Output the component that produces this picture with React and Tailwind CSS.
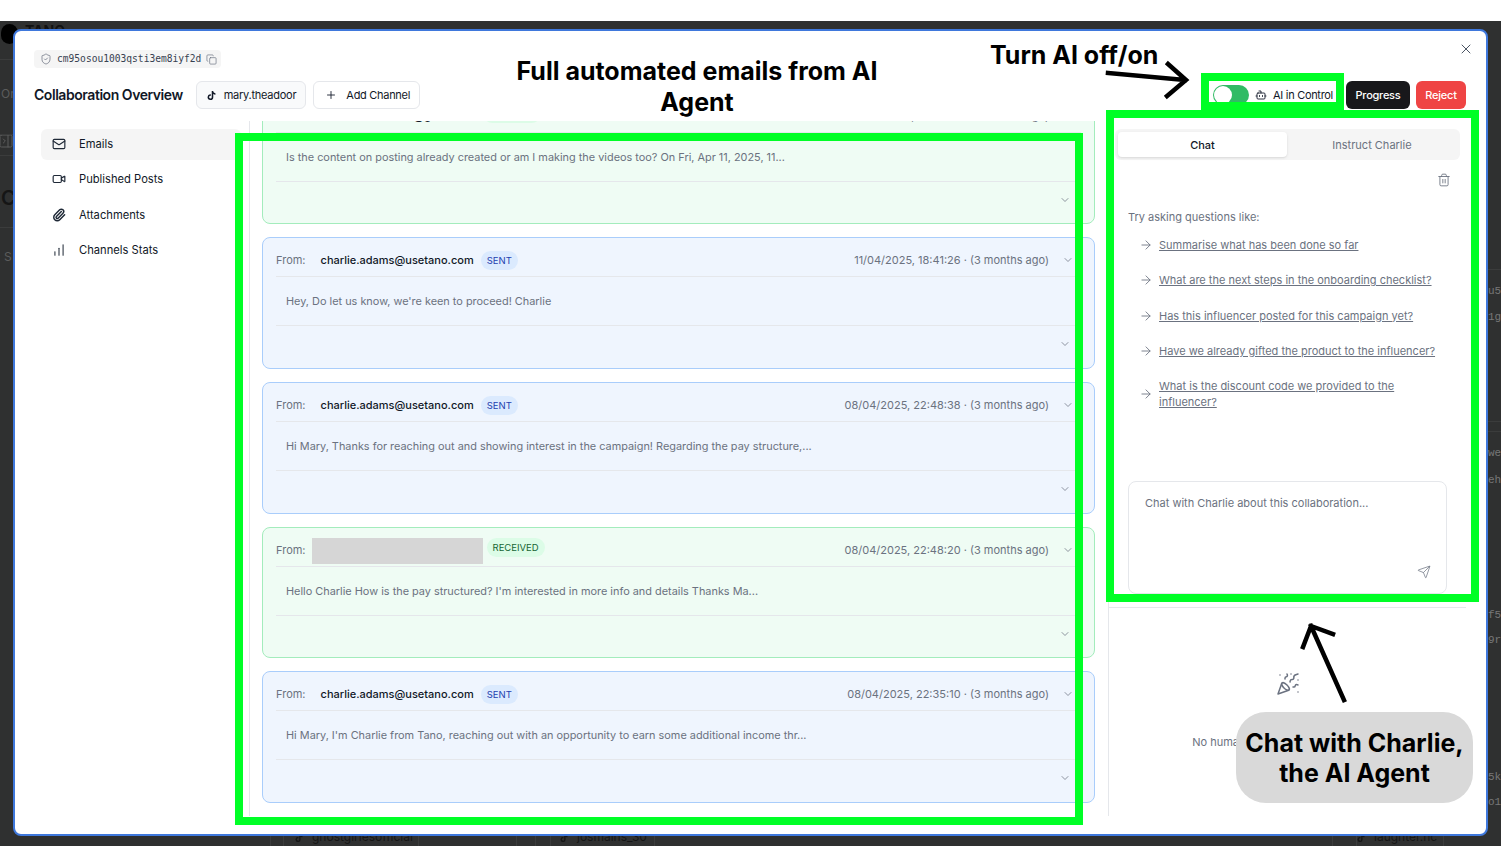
import {
  Mail,
  Video,
  Paperclip,
  ChartNoAxesColumnIncreasing,
  ChevronDown,
  Copy,
  ShieldCheck,
  Plus,
  X,
  Bot,
  Trash2,
  ArrowRight,
  Send,
  PartyPopper,
  PanelRightClose,
} from 'lucide-react';
import { FaTiktok } from 'react-icons/fa';

const navItems = [
  { label: 'Emails', icon: Mail, stroke: 2 },
  { label: 'Published Posts', icon: Video, stroke: 2 },
  { label: 'Attachments', icon: Paperclip, stroke: 2.5 },
  { label: 'Channels Stats', icon: ChartNoAxesColumnIncreasing, stroke: 1.75 },
];

const emails = [
  {
    from: 'hi.maria.theadoor@gmail.com',
    type: 'received',
    date: '11/04/2025, 18:12:44 · (3 months ago)',
    body: 'Is the content on posting already created or am I making the videos too? On Fri, Apr 11, 2025, 11...',
  },
  {
    from: 'charlie.adams@usetano.com',
    type: 'sent',
    date: '11/04/2025, 18:41:26 · (3 months ago)',
    body: "Hey, Do let us know, we're keen to proceed! Charlie",
  },
  {
    from: 'charlie.adams@usetano.com',
    type: 'sent',
    date: '08/04/2025, 22:48:38 · (3 months ago)',
    body: 'Hi Mary, Thanks for reaching out and showing interest in the campaign! Regarding the pay structure,...',
  },
  {
    redacted: true,
    type: 'received',
    date: '08/04/2025, 22:48:20 · (3 months ago)',
    body: "Hello Charlie How is the pay structured? I'm interested in more info and details Thanks Ma...",
  },
  {
    from: 'charlie.adams@usetano.com',
    type: 'sent',
    date: '08/04/2025, 22:35:10 · (3 months ago)',
    body: "Hi Mary, I'm Charlie from Tano, reaching out with an opportunity to earn some additional income thr...",
  },
];

const suggestions = [
  'Summarise what has been done so far',
  'What are the next steps in the onboarding checklist?',
  'Has this influencer posted for this campaign yet?',
  'Have we already gifted the product to the influencer?',
  'What is the discount code we provided to the influencer?',
];

// bits of the page behind the modal that stick out at the edges
const backdropBits = [
  { text: 'TANO', cls: 'left-[25px] top-[24px] text-[14px] font-bold text-[#111111]' },
  { text: 'Or', cls: 'left-[1px] top-[87px] text-[12px] text-[#5c5c5c]' },
  { text: 'C', cls: 'left-[1px] top-[191px] text-[20px] font-semibold text-[#151515]' },
  { text: 'S', cls: 'left-[4px] top-[250px] text-[12px] text-[#5c5c5c]' },
  { text: 'u5', cls: 'left-[1488px] top-[284px] font-mono text-[11px] text-[#777777]' },
  { text: '1g', cls: 'left-[1488px] top-[310px] font-mono text-[11px] text-[#777777]' },
  { text: 'we', cls: 'left-[1488px] top-[446px] font-mono text-[11px] text-[#777777]' },
  { text: 'eh', cls: 'left-[1488px] top-[473px] font-mono text-[11px] text-[#777777]' },
  { text: 'f5', cls: 'left-[1488px] top-[608px] font-mono text-[11px] text-[#777777]' },
  { text: '9r', cls: 'left-[1488px] top-[633px] font-mono text-[11px] text-[#777777]' },
  { text: '5k', cls: 'left-[1488px] top-[770px] font-mono text-[11px] text-[#777777]' },
  { text: 'o1', cls: 'left-[1488px] top-[795px] font-mono text-[11px] text-[#777777]' },
  { text: 'ghostgirlesofficial', cls: 'left-[312px] top-[830px] text-[12px] text-[#151515]' },
  { text: 'josmains_30', cls: 'left-[577px] top-[830px] text-[12px] text-[#151515]' },
  { text: 'laughter.nc', cls: 'left-[1374px] top-[830px] text-[12px] text-[#151515]' },
];

const backdropLines = [
  'left-0 top-[59px] h-px w-[13px]',
  'left-0 top-[134px] h-px w-[13px]',
  'left-0 top-[155px] h-px w-[13px]',
  'left-0 top-[227px] h-px w-[13px]',
  'left-[1488px] top-[269px] h-px w-[13px]',
  'left-[1488px] top-[421px] h-px w-[13px]',
  'left-[1488px] top-[431px] h-px w-[13px]',
  'left-[270px] top-[836px] h-[10px] w-px',
  'left-[283px] top-[836px] h-[10px] w-px',
  'left-[418px] top-[836px] h-[10px] w-px',
  'left-[516px] top-[836px] h-[10px] w-px',
  'left-[535px] top-[836px] h-[10px] w-px',
  'left-[550px] top-[836px] h-[10px] w-px',
  'left-[654px] top-[836px] h-[10px] w-px',
  'left-[1332px] top-[836px] h-[10px] w-px',
  'left-[1356px] top-[836px] h-[10px] w-px',
  'left-[1443px] top-[836px] h-[10px] w-px',
];

function EmailCard({ email }) {
  const received = email.type === 'received';
  return (
    <div
      className={`h-[131.6px] shrink-0 rounded-lg border px-[13px] ${
        received ? 'border-[#a3ecbc] bg-[#effcf4]' : 'border-[#a9cdfb] bg-[#eff5fe]'
      }`}
    >
      <div className="flex h-[39px] items-center border-b border-[#e5e7eb] pt-[6px]">
        <span className="text-[#6b7280]">From:</span>
        {email.redacted ? (
          <div className="ml-[6px] mt-[3px] h-[26px] w-[171px] bg-[#d6d6d6]" />
        ) : (
          <span className="ml-[15px] font-medium text-[#111827]">{email.from}</span>
        )}
        <span
          className={`rounded-full px-[6px] py-[3px] text-[9.5px] leading-[13px] ${
            received ? 'ml-[4px] mt-[-4px] bg-[#dcfce7] text-[#166534]' : 'ml-[7px] bg-[#dbeafe] text-[#1e40af]'
          }`}
        >
          {received ? 'RECEIVED' : 'SENT'}
        </span>
        <span className="ml-auto text-[#6b7280]">{email.date}</span>
        <ChevronDown className="ml-[13px] mr-[7px] size-[12px] text-[#6b7280]" strokeWidth={1.5} />
      </div>
      <div className="flex h-[49px] items-center border-b border-[#e5e7eb] pl-[10px] text-[10.9px] text-[#6b7280]">
        {email.body}
      </div>
      <div className="flex h-[36px] items-center justify-end pr-[10px]">
        <ChevronDown className="size-[12px] text-[#6b7280]" strokeWidth={1.5} />
      </div>
    </div>
  );
}

function Annotations() {
  return (
    <>
      <div className="absolute left-[235px] top-[133px] h-[692px] w-[848px] border-[8px] border-[#00ff26]" />
      <div className="absolute left-[1106px] top-[110px] h-[492px] w-[373px] border-[8px] border-[#00ff26]" />
      <div className="absolute left-[1201px] top-[73px] h-[37px] w-[143px] border-[8px] border-[#00ff26]" />

      <div className="absolute left-[497px] top-[56px] w-[400px] text-center text-[25px] font-bold leading-[31px] text-black">
        Full automated emails from AI Agent
      </div>
      <div className="absolute left-[990px] top-[40px] text-[25px] font-bold leading-[31px] text-black">
        Turn AI off/on
      </div>

      <svg className="absolute left-0 top-0" width="1501" height="846" fill="none" stroke="#000" strokeWidth="4.5" strokeLinecap="square">
        <path d="M1108 73 L1185 80 M1168 64 L1186 80 L1167 96" />
        <path d="M1344 700 L1311 626 M1303 647 L1311 626 L1333 634" />
      </svg>

      <div className="absolute left-[1236px] top-[712px] flex h-[91px] w-[237px] items-center justify-center rounded-[30px] bg-[#d9d9d9] text-center text-[25px] font-bold leading-[30px] text-black">
        <div>
          Chat with Charlie,
          <br />
          the AI Agent
        </div>
      </div>
    </>
  );
}

export default function App() {
  return (
    <div className="relative h-[846px] w-[1501px] overflow-hidden bg-white font-['Inter',sans-serif] text-[11px] leading-[16px]">
      <div className="h-[21px] bg-white" />
      <div className="h-[825px] bg-[#2f3030] pl-[13px] pt-[8px]">
        {/* modal */}
        <div className="relative z-10 flex h-[807px] w-[1475px] flex-col rounded-lg border-2 border-[#3f78dc] bg-white pt-[19px]">
          <button className="absolute right-[12px] top-[10px] text-[#4b5563]">
            <X className="size-[16px]" strokeWidth={1.5} />
          </button>

          <div className="ml-[19px] flex h-[18px] w-[187px] items-center rounded bg-[#f5f5f5] pl-[6px] font-['DejaVu_Sans_Mono',monospace] text-[9.6px] text-[#374151]">
            <ShieldCheck className="size-[12px] text-[#6b7280]" strokeWidth={1.5} />
            <span className="ml-[5px]">cm95osou1003qsti3em8iyf2d</span>
            <Copy className="ml-[5px] size-[11px] text-[#6b7280]" strokeWidth={1.5} />
          </div>

          <div className="mt-[13px] flex h-[28px] items-center pl-[19px] pr-[20px]">
            <h1 className="text-[14px] font-semibold tracking-[-0.45px] text-[#111827]">Collaboration Overview</h1>
            <div className="ml-[13px] flex h-[28px] items-center rounded-md border border-[#e5e7eb] bg-[#f9fafb] pl-[10px] pr-[9px] tracking-[-0.25px] text-[#111827]">
              <FaTiktok className="size-[9px]" />
              <span className="ml-[8px]">mary.theadoor</span>
            </div>
            <button className="ml-[7px] flex h-[28px] items-center rounded-md border border-[#e5e7eb] bg-white pl-[11px] pr-[9px] tracking-[-0.3px] text-[#111827]">
              <Plus className="size-[12px]" strokeWidth={1.75} />
              <span className="ml-[9px]">Add Channel</span>
            </button>

            <div className="ml-auto flex items-center">
              <div className="flex h-[20px] w-[36px] items-center rounded-full bg-[#31bb65] pl-[1px]">
                <div className="size-[18px] rounded-full bg-white" />
              </div>
              <Bot className="ml-[6px] size-[12px] text-[#111827]" strokeWidth={1.75} />
              <span className="ml-[6px] tracking-[-0.3px] text-[#111827]">AI in Control</span>
              <button className="ml-[13px] h-[28px] w-[64px] rounded-md bg-[#18181b] font-medium tracking-[-0.25px] text-white">Progress</button>
              <button className="ml-[6px] h-[28px] w-[50px] rounded-md bg-[#ef4444] font-medium tracking-[-0.25px] text-white">Reject</button>
            </div>
          </div>

          <div className="mb-[18px] mt-[12px] flex min-h-0 flex-1">
            {/* sidebar */}
            <nav className="flex w-[235px] shrink-0 flex-col gap-[4.5px] border-r border-[#e5e7eb] pl-[26px] pr-[8px] pt-[8px]">
              {navItems.map((item, i) => (
                <div
                  key={item.label}
                  className={`flex h-[31px] items-center rounded-md pb-[2px] pl-[11px] text-[#111827] ${i === 0 ? 'bg-[#f5f5f5]' : ''}`}
                >
                  <item.icon className="size-[14px] text-[#1f2937]" strokeWidth={item.stroke} />
                  <span className="ml-[13px] text-[11.2px]">{item.label}</span>
                </div>
              ))}
            </nav>

            {/* emails */}
            <div className="min-w-0 flex-1 overflow-hidden pl-[12px] pr-[13px]">
              <div className="-mt-[28.2px] flex flex-col gap-[13px]">
                {emails.map((email, i) => (
                  <EmailCard key={i} email={email} />
                ))}
              </div>
            </div>

            {/* chat */}
            <div className="flex w-[378px] shrink-0 flex-col border-l border-[#e5e7eb]">
              <div className="mr-[20px] flex h-[487px] flex-col border-b border-[#e5e7eb] pl-[7px] pr-[6px] pt-[8px]">
                <div className="-ml-[1px] flex h-[31px] rounded-md bg-[#f5f5f5] p-[3px]">
                  <div className="flex w-[169px] items-center justify-center rounded bg-white font-medium text-[#111827] shadow-sm">Chat</div>
                  <div className="flex flex-1 items-center justify-center text-[#6b7280]">Instruct Charlie</div>
                </div>
                <div className="mt-[13px] flex h-[14px] justify-end pr-[9px]">
                  <Trash2 className="size-[14px] text-[#6b7280]" strokeWidth={1.5} />
                </div>
                <p className="ml-[12px] mt-[22px] text-[#6b7280]">Try asking questions like:</p>
                <div className="ml-[23px] mt-[12px] flex flex-col gap-[19.3px] text-[#6b7280]">
                  {suggestions.map((s) => (
                    <div key={s} className="flex w-[303px] items-center gap-[6px]">
                      <ArrowRight className="size-[14px] shrink-0" strokeWidth={1.5} />
                      <span className="underline">{s}</span>
                    </div>
                  ))}
                </div>
                <div className="relative mb-[13px] ml-[12px] mt-auto h-[113px] w-[319px] rounded-lg border border-[#e5e7eb] bg-white px-[16px] py-[13px] text-[#6b7280]">
                  Chat with Charlie about this collaboration...
                  <Send className="absolute bottom-[14px] right-[15px] size-[14px]" strokeWidth={1.25} />
                </div>
              </div>
              <div className="mr-[20px] flex flex-col items-center pt-[64px]">
                <PartyPopper className="size-[24px] text-[#6b7280]" strokeWidth={1.5} />
                <p className="mt-[38px] text-[#6b7280]">No human reviews needed right now</p>
              </div>
            </div>
          </div>
        </div>
      </div>

      {/* backdrop page, mostly hidden by the modal */}
      <div className="absolute left-[1px] top-[24px] h-[20px] w-[17px] rounded-full bg-black" />
      <PanelRightClose className="absolute left-[-2px] top-[133px] size-[16px] text-[#5c5c5c]" strokeWidth={1.5} />
      <FaTiktok className="absolute left-[295px] top-[834px] size-[8px] text-[#151515]" />
      <FaTiktok className="absolute left-[560px] top-[834px] size-[8px] text-[#151515]" />
      <FaTiktok className="absolute left-[1357px] top-[834px] size-[8px] text-[#151515]" />
      {backdropLines.map((cls) => (
        <div key={cls} className={`absolute bg-[#3b3c3c] ${cls}`} />
      ))}
      {backdropBits.map((b) => (
        <span key={b.text} className={`absolute leading-[14px] ${b.cls}`}>
          {b.text}
        </span>
      ))}

      <div className="absolute inset-0 z-20">
        <Annotations />
      </div>
    </div>
  );
}
